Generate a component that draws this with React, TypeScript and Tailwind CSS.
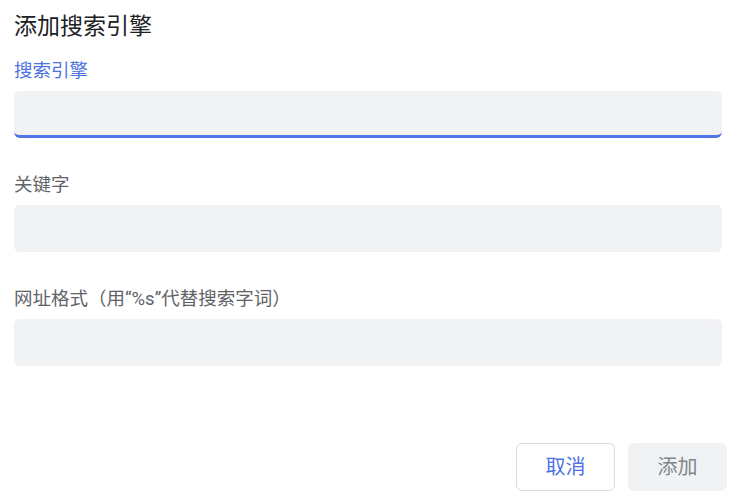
export default function App() {
  const font = { fontFamily: "Roboto, 'Noto Sans CJK SC', sans-serif" };
  return (
    <div className="w-[740px] h-[497px] bg-white flex flex-col" style={font}>
      <div className="pl-[14px] pr-[18px] pt-[11px]">
        <div className="text-[23px] leading-[32px] text-[#202124]">添加搜索引擎</div>
        <div className="mt-[16px] text-[18.5px] leading-[24px] text-[#4e72e3]">搜索引擎</div>
        <div className="mt-[8px] h-[47px] rounded-[6px] bg-[#f1f2f4] border-b-[3px] border-[#4e74e6]"></div>
        <div className="mt-[35px] text-[18.5px] leading-[24px] text-[#5f6368]">关键字</div>
        <div className="mt-[8px] h-[47px] rounded-[6px] bg-[#f1f2f4]"></div>
        <div className="mt-[35px] text-[18.5px] leading-[24px] text-[#5f6368]">网址格式（用“%s”代替搜索字词）</div>
        <div className="mt-[8px] h-[47px] rounded-[6px] bg-[#f1f2f4]"></div>
      </div>
      <div className="mt-[77px] flex justify-end gap-[13px] pr-[13px]">
        <button className="w-[99px] h-[48px] rounded-[6px] border border-[#dadce0] bg-white text-[20px] text-[#4e72e3]">取消</button>
        <button className="w-[99px] h-[48px] rounded-[6px] bg-[#f1f2f4] text-[20px] text-[#80868b]">添加</button>
      </div>
    </div>
  );
}
